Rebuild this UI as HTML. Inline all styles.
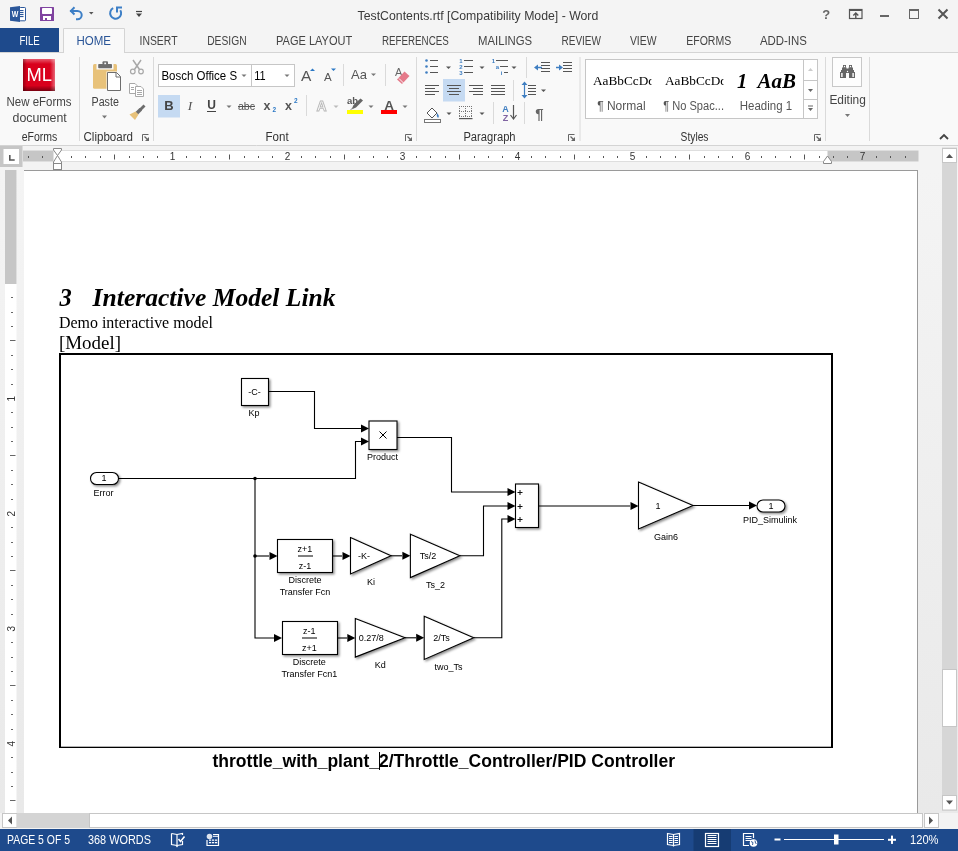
<!DOCTYPE html>
<html><head><meta charset="utf-8"><title>TestContents.rtf - Word</title>
<style>html,body{margin:0;padding:0;width:958px;height:851px;overflow:hidden;background:#f3f3f3}
svg{display:block;font-family:'Liberation Sans',sans-serif;will-change:transform}</style></head>
<body><svg width="958" height="851" viewBox="0 0 958 851">
<rect x="0" y="0" width="958" height="53" fill="#f4f4f4"/>
<rect x="19.5" y="7.5" width="6" height="13.3" fill="#fff" stroke="#2b579a" stroke-width="1" rx="0.8"/>
<rect x="20" y="10" width="3.5" height="1.1" fill="#2b579a"/>
<rect x="20" y="12" width="3.5" height="1.1" fill="#2b579a"/>
<rect x="20" y="14" width="3.5" height="1.1" fill="#2b579a"/>
<rect x="20" y="16" width="3.5" height="1.1" fill="#2b579a"/>
<path d="M10 7.2 L20 6 L20 22 L10 20.8 Z" fill="#2b579a"/>
<text x="15" y="17.1" font-size="8.5" font-weight="bold" fill="#fff" text-anchor="middle" textLength="6.6" lengthAdjust="spacingAndGlyphs">W</text>
<rect x="40" y="7" width="14" height="14" fill="#8043a0" rx="0.5"/>
<rect x="42" y="8" width="10" height="6" fill="#fff" rx="0.8"/>
<rect x="43" y="16" width="8" height="4" fill="#fff"/>
<rect x="45" y="18" width="2" height="2" fill="#8043a0"/>
<path d="M70 10.9 L77.5 10.9 A4.2 4.2 0 0 1 77.5 19.3 L76 19.3" fill="none" stroke="#3d7fc6" stroke-width="2"/>
<path d="M74.5 7.3 L70.9 10.9 L74.5 14.5" fill="none" stroke="#3d7fc6" stroke-width="2"/>
<path d="M89 12 L93.5 12 L91.25 14.5 Z" fill="#555"/>
<path d="M113.2 8.2 A5.5 5.5 0 1 0 120.3 10.2" fill="none" stroke="#3d7fc6" stroke-width="2"/>
<path d="M117 12.5 L117 7.6 L122 7.6" fill="none" stroke="#3d7fc6" stroke-width="2"/>
<line x1="136" y1="11.5" x2="142" y2="11.5" stroke="#444" stroke-width="1.2"/>
<path d="M136 13.5 L142 13.5 L139 17 Z" fill="#444"/>
<text x="357.6" y="19.5" font-size="13" fill="#3a3a3a" textLength="240.7" lengthAdjust="spacingAndGlyphs">TestContents.rtf [Compatibility Mode] - Word</text>
<text x="826.3" y="19" font-size="13" font-weight="bold" fill="#666" text-anchor="middle">?</text>
<rect x="849.5" y="9.5" width="12.5" height="9" fill="none" stroke="#555" stroke-width="1.2"/>
<line x1="849.5" y1="10.5" x2="862" y2="10.5" stroke="#555" stroke-width="1"/>
<path d="M855.8 18.5 L855.8 13 M853.3 15.5 L855.8 13 L858.3 15.5" fill="none" stroke="#555" stroke-width="1.4"/>
<rect x="880" y="15" width="9" height="2" fill="#666"/>
<rect x="909.5" y="9.5" width="9" height="9" fill="none" stroke="#666" stroke-width="1"/>
<rect x="909" y="9" width="10" height="2" fill="#666"/>
<path d="M938.5 9.5 L947.5 18.5 M947.5 9.5 L938.5 18.5" fill="none" stroke="#555" stroke-width="2"/>
<rect x="0" y="28" width="59" height="25" fill="#1e4a8c"/>
<text x="19.4" y="44.7" font-size="12" fill="#fff" textLength="20.4" lengthAdjust="spacingAndGlyphs">FILE</text>
<path d="M63.5 53 L63.5 28.5 L124.5 28.5 L124.5 53" fill="#f9f9f9" stroke="#d4d4d4" stroke-width="1"/>
<text x="76.4" y="44.7" font-size="12" fill="#2a5597" textLength="34.5" lengthAdjust="spacingAndGlyphs">HOME</text>
<text x="139.5" y="44.7" font-size="12" fill="#444" textLength="38.0" lengthAdjust="spacingAndGlyphs">INSERT</text>
<text x="207.2" y="44.7" font-size="12" fill="#444" textLength="39.4" lengthAdjust="spacingAndGlyphs">DESIGN</text>
<text x="276" y="44.7" font-size="12" fill="#444" textLength="76.2" lengthAdjust="spacingAndGlyphs">PAGE LAYOUT</text>
<text x="381.9" y="44.7" font-size="12" fill="#444" textLength="66.9" lengthAdjust="spacingAndGlyphs">REFERENCES</text>
<text x="478" y="44.7" font-size="12" fill="#444" textLength="54.2" lengthAdjust="spacingAndGlyphs">MAILINGS</text>
<text x="561.5" y="44.7" font-size="12" fill="#444" textLength="39.5" lengthAdjust="spacingAndGlyphs">REVIEW</text>
<text x="629.9" y="44.7" font-size="12" fill="#444" textLength="26.6" lengthAdjust="spacingAndGlyphs">VIEW</text>
<text x="686.2" y="44.7" font-size="12" fill="#444" textLength="45.1" lengthAdjust="spacingAndGlyphs">EFORMS</text>
<text x="759.9" y="44.7" font-size="12" fill="#444" textLength="47.0" lengthAdjust="spacingAndGlyphs">ADD-INS</text>
<rect x="0" y="53" width="958" height="92.5" fill="#f9f9f9"/>
<line x1="0" y1="52.5" x2="63.5" y2="52.5" stroke="#d4d4d4" stroke-width="1"/>
<line x1="124.5" y1="52.5" x2="958" y2="52.5" stroke="#d4d4d4" stroke-width="1"/>
<line x1="0" y1="145.5" x2="958" y2="145.5" stroke="#d4d4d4" stroke-width="1"/>
<line x1="79.5" y1="57" x2="79.5" y2="141" stroke="#dadada" stroke-width="1"/>
<line x1="153.5" y1="57" x2="153.5" y2="141" stroke="#dadada" stroke-width="1"/>
<line x1="416.5" y1="57" x2="416.5" y2="141" stroke="#dadada" stroke-width="1"/>
<line x1="580" y1="57" x2="580" y2="141" stroke="#dadada" stroke-width="1"/>
<line x1="825.5" y1="57" x2="825.5" y2="141" stroke="#dadada" stroke-width="1"/>
<line x1="869.5" y1="57" x2="869.5" y2="141" stroke="#dadada" stroke-width="1"/>
<text x="21.7" y="140.6" font-size="12" fill="#333" textLength="35.6" lengthAdjust="spacingAndGlyphs">eForms</text>
<text x="83.5" y="140.6" font-size="12" fill="#333" textLength="49.5" lengthAdjust="spacingAndGlyphs">Clipboard</text>
<text x="265.5" y="140.6" font-size="12" fill="#333" textLength="23.1" lengthAdjust="spacingAndGlyphs">Font</text>
<text x="463.4" y="140.6" font-size="12" fill="#333" textLength="52.2" lengthAdjust="spacingAndGlyphs">Paragraph</text>
<text x="680.6" y="140.6" font-size="12" fill="#333" textLength="27.9" lengthAdjust="spacingAndGlyphs">Styles</text>
<path d="M142.5 141 L142.5 134.5 L148.5 134.5" fill="none" stroke="#666" stroke-width="1"/>
<path d="M144.5 136.5 L147.5 139.5" fill="none" stroke="#666" stroke-width="1.2"/>
<path d="M149 137 L149 141 L145 141 Z" fill="#666"/>
<path d="M405.5 141 L405.5 134.5 L411.5 134.5" fill="none" stroke="#666" stroke-width="1"/>
<path d="M407.5 136.5 L410.5 139.5" fill="none" stroke="#666" stroke-width="1.2"/>
<path d="M412 137 L412 141 L408 141 Z" fill="#666"/>
<path d="M568.5 141 L568.5 134.5 L574.5 134.5" fill="none" stroke="#666" stroke-width="1"/>
<path d="M570.5 136.5 L573.5 139.5" fill="none" stroke="#666" stroke-width="1.2"/>
<path d="M575 137 L575 141 L571 141 Z" fill="#666"/>
<path d="M814.5 141 L814.5 134.5 L820.5 134.5" fill="none" stroke="#666" stroke-width="1"/>
<path d="M816.5 136.5 L819.5 139.5" fill="none" stroke="#666" stroke-width="1.2"/>
<path d="M821 137 L821 141 L817 141 Z" fill="#666"/>
<defs><linearGradient id="mlg" x1="0" y1="0" x2="0" y2="1"><stop offset="0" stop-color="#e4203a"/><stop offset="1" stop-color="#b50d20"/></linearGradient></defs>
<defs><linearGradient id="mlt" x1="0" y1="0" x2="0" y2="1"><stop offset="0" stop-color="#fff" stop-opacity="0.35"/><stop offset="1" stop-color="#fff" stop-opacity="0"/></linearGradient><linearGradient id="mlr" x1="1" y1="0" x2="0" y2="0"><stop offset="0" stop-color="#fff" stop-opacity="0.4"/><stop offset="1" stop-color="#fff" stop-opacity="0"/></linearGradient><linearGradient id="mlb" x1="0" y1="1" x2="0" y2="0"><stop offset="0" stop-color="#000" stop-opacity="0.45"/><stop offset="1" stop-color="#000" stop-opacity="0"/></linearGradient><linearGradient id="mll" x1="0" y1="0" x2="1" y2="0"><stop offset="0" stop-color="#000" stop-opacity="0.3"/><stop offset="1" stop-color="#000" stop-opacity="0"/></linearGradient></defs>
<rect x="23" y="59" width="32" height="32" fill="#d9001c"/>
<rect x="23" y="59" width="32" height="5" fill="url(#mlt)"/>
<rect x="50" y="59" width="5" height="32" fill="url(#mlr)"/>
<rect x="23" y="85.5" width="32" height="5.5" fill="url(#mlb)"/>
<rect x="23" y="59" width="4" height="32" fill="url(#mll)"/>
<text x="39.3" y="81" font-size="19" fill="#fff" text-anchor="middle" textLength="25.5" lengthAdjust="spacingAndGlyphs">ML</text>
<text x="6.5" y="105.6" font-size="12" fill="#444" textLength="65" lengthAdjust="spacingAndGlyphs">New eForms</text>
<text x="12.5" y="121.5" font-size="12" fill="#444" textLength="54.3" lengthAdjust="spacingAndGlyphs">document</text>
<rect x="93" y="64" width="24" height="24.7" fill="#e8c27a" rx="1.5"/>
<rect x="96.5" y="63" width="17" height="6.5" fill="#f9f9f9"/>
<rect x="98.2" y="64" width="13.8" height="4.2" fill="#6d6d6d" rx="0.8"/>
<rect x="102.5" y="61.2" width="5.5" height="3.5" fill="#6d6d6d" rx="1"/>
<rect x="104.3" y="62.6" width="1.8" height="1.6" fill="#f9f9f9"/>
<path d="M106.5 71.5 L117 71.5 L121.5 76 L121.5 91.5 L106.5 91.5 Z" fill="#f9f9f9"/>
<path d="M107.5 72.5 L116.5 72.5 L120.5 76.5 L120.5 90.5 L107.5 90.5 Z" fill="#fff" stroke="#6d6d6d" stroke-width="1"/>
<path d="M116 72.5 L116 77 L120.5 77" fill="none" stroke="#6d6d6d" stroke-width="1"/>
<text x="91.5" y="105.6" font-size="12" fill="#444" textLength="27.4" lengthAdjust="spacingAndGlyphs">Paste</text>
<path d="M102 115.5 L107 115.5 L104.5 118.5 Z" fill="#777"/>
<path d="M133 60 L139.5 69.5 M141 60 L134.5 69.5" fill="none" stroke="#a8a8a8" stroke-width="1.5"/>
<circle cx="132.8" cy="71.5" r="2.3" fill="none" stroke="#a8a8a8" stroke-width="1.2"/>
<circle cx="141" cy="71.5" r="2.3" fill="none" stroke="#a8a8a8" stroke-width="1.2"/>
<path d="M129.5 83.5 L135 83.5 L137 85.5 L137 93.5 L129.5 93.5 Z" fill="#fff" stroke="#a8a8a8" stroke-width="1"/>
<line x1="131" y1="87.5" x2="134" y2="87.5" stroke="#a8a8a8" stroke-width="1"/>
<line x1="131" y1="89.5" x2="134" y2="89.5" stroke="#a8a8a8" stroke-width="1"/>
<path d="M135.5 86.5 L141 86.5 L143.5 89 L143.5 96.5 L135.5 96.5 Z" fill="#fff" stroke="#a8a8a8" stroke-width="1"/>
<line x1="137" y1="90.5" x2="142" y2="90.5" stroke="#a8a8a8" stroke-width="1"/>
<line x1="137" y1="92.5" x2="142" y2="92.5" stroke="#a8a8a8" stroke-width="1"/>
<line x1="137" y1="94.5" x2="142" y2="94.5" stroke="#a8a8a8" stroke-width="1"/>
<path d="M139 109 L143.5 104.5 L145.5 106.5 L141 111 Z" fill="#6d6d6d"/>
<path d="M135.5 112 L139.5 108 L142 110.5 L138 114.5 Z" fill="#6d6d6d"/>
<path d="M129.5 114.5 L135.5 111.5 L138.5 114.5 L135 120 Z" fill="#e8c27a"/>
<rect x="158.5" y="64.5" width="93" height="22" fill="#fff" stroke="#c6c6c6" stroke-width="1"/>
<rect x="251.5" y="64.5" width="43" height="22" fill="#fff" stroke="#c6c6c6" stroke-width="1"/>
<text x="161.4" y="80" font-size="12" textLength="75.7" lengthAdjust="spacingAndGlyphs">Bosch Office S</text>
<text x="254.3" y="80" font-size="12" textLength="11.4" lengthAdjust="spacingAndGlyphs">11</text>
<path d="M241.5 74.5 L246.5 74.5 L244 77 Z" fill="#777"/>
<path d="M284.5 74.5 L289.5 74.5 L287 77 Z" fill="#777"/>
<text x="301" y="81" font-size="15.5" fill="#555">A</text>
<path d="M310 71 L315 71 L312.5 68.5 Z" fill="#2b78c5"/>
<text x="324" y="81" font-size="11.5" fill="#555">A</text>
<path d="M331 68.5 L336 68.5 L333.5 71 Z" fill="#2b78c5"/>
<line x1="343.5" y1="64" x2="343.5" y2="86" stroke="#dadada" stroke-width="1"/>
<text x="351" y="79" font-size="13" fill="#555">Aa</text>
<path d="M371 73.5 L376 73.5 L373.5 76 Z" fill="#777"/>
<line x1="385.5" y1="64" x2="385.5" y2="86" stroke="#dadada" stroke-width="1"/>
<text x="395" y="76.2" font-size="11" fill="#666">A</text>
<path d="M397 79.5 L404.5 71.5 L409.5 76 L402 84 Z" fill="#e57a8a"/>
<line x1="399" y1="78.5" x2="403.5" y2="83" stroke="#f9f9f9" stroke-width="1"/>
<rect x="158" y="95" width="22" height="22.5" fill="#c5daf2"/>
<text x="169" y="110" font-size="13" font-weight="bold" fill="#444" text-anchor="middle">B</text>
<text x="190" y="110" font-size="13.5" font-family="'Liberation Serif',serif" font-style="italic" fill="#555" text-anchor="middle">I</text>
<text x="211.5" y="109" font-size="12" font-weight="bold" fill="#444" text-anchor="middle">U</text>
<line x1="207" y1="111.5" x2="216" y2="111.5" stroke="#444" stroke-width="1"/>
<path d="M226.5 105.5 L231.5 105.5 L229 108 Z" fill="#777"/>
<text x="246.5" y="110" font-size="11.5" fill="#555" text-anchor="middle" textLength="17" lengthAdjust="spacingAndGlyphs">abc</text>
<line x1="238" y1="106.5" x2="255" y2="106.5" stroke="#555" stroke-width="1"/>
<text x="267" y="110" font-size="12.5" font-weight="bold" fill="#555" text-anchor="middle">x</text>
<text x="272.5" y="111.5" font-size="6.5" font-weight="bold" fill="#2b78c5">2</text>
<text x="288.5" y="110" font-size="12.5" font-weight="bold" fill="#555" text-anchor="middle">x</text>
<text x="294" y="102.5" font-size="6.5" font-weight="bold" fill="#2b78c5">2</text>
<line x1="306.5" y1="95" x2="306.5" y2="116" stroke="#dadada" stroke-width="1"/>
<text x="321.5" y="111" font-size="14" font-weight="bold" fill="#fdfdfd" text-anchor="middle" stroke="#b8b8b8" stroke-width="0.9">A</text>
<path d="M333.5 105.5 L338.5 105.5 L336 108 Z" fill="#bbb"/>
<text x="347" y="104" font-size="9.5" font-weight="bold" fill="#555">ab</text>
<path d="M351.5 109.5 L353.5 105 L360.5 98.5 L363 100.5 L356 107.5 Z" fill="#666"/>
<line x1="350.5" y1="110" x2="352.5" y2="108" stroke="#999" stroke-width="1"/>
<rect x="347" y="110" width="16" height="4" fill="#ffff00"/>
<path d="M368.5 105.5 L373.5 105.5 L371 108 Z" fill="#777"/>
<text x="389" y="109.5" font-size="13.5" font-weight="bold" fill="#555" text-anchor="middle">A</text>
<rect x="381" y="110" width="16" height="4" fill="#ff0000"/>
<path d="M402.5 105.5 L407.5 105.5 L405 108 Z" fill="#777"/>
<circle cx="426.5" cy="60.5" r="1.3" fill="#3f7ec1"/>
<line x1="430" y1="60.5" x2="438" y2="60.5" stroke="#555" stroke-width="1"/>
<circle cx="426.5" cy="66.5" r="1.3" fill="#3f7ec1"/>
<line x1="430" y1="66.5" x2="438" y2="66.5" stroke="#555" stroke-width="1"/>
<circle cx="426.5" cy="72.5" r="1.3" fill="#3f7ec1"/>
<line x1="430" y1="72.5" x2="438" y2="72.5" stroke="#555" stroke-width="1"/>
<path d="M446 66.5 L451 66.5 L448.5 69 Z" fill="#555"/>
<text x="461" y="62.8" font-size="6" font-weight="bold" fill="#3f7ec1" text-anchor="middle">1</text>
<line x1="464" y1="60.5" x2="473" y2="60.5" stroke="#555" stroke-width="1"/>
<text x="461" y="68.8" font-size="6" font-weight="bold" fill="#3f7ec1" text-anchor="middle">2</text>
<line x1="464" y1="66.5" x2="473" y2="66.5" stroke="#555" stroke-width="1"/>
<text x="461" y="74.8" font-size="6" font-weight="bold" fill="#3f7ec1" text-anchor="middle">3</text>
<line x1="464" y1="72.5" x2="473" y2="72.5" stroke="#555" stroke-width="1"/>
<path d="M479.5 66.5 L484.5 66.5 L482 69 Z" fill="#555"/>
<text x="493.5" y="63" font-size="6" font-weight="bold" fill="#3f7ec1" text-anchor="middle">1</text>
<line x1="496" y1="60.5" x2="508" y2="60.5" stroke="#555" stroke-width="1"/>
<text x="497.5" y="69" font-size="6" font-weight="bold" fill="#3f7ec1" text-anchor="middle">a</text>
<line x1="500" y1="66.5" x2="508" y2="66.5" stroke="#555" stroke-width="1"/>
<text x="501.5" y="75" font-size="6" font-weight="bold" fill="#3f7ec1" text-anchor="middle">i</text>
<line x1="504" y1="72.5" x2="508" y2="72.5" stroke="#555" stroke-width="1"/>
<path d="M511.5 66.5 L516.5 66.5 L514 69 Z" fill="#555"/>
<line x1="526.5" y1="57" x2="526.5" y2="78" stroke="#dadada" stroke-width="1"/>
<line x1="541" y1="62.5" x2="550" y2="62.5" stroke="#555" stroke-width="1"/>
<line x1="563" y1="62.5" x2="572" y2="62.5" stroke="#555" stroke-width="1"/>
<line x1="541" y1="65.5" x2="550" y2="65.5" stroke="#555" stroke-width="1"/>
<line x1="563" y1="65.5" x2="572" y2="65.5" stroke="#555" stroke-width="1"/>
<line x1="541" y1="68.5" x2="550" y2="68.5" stroke="#555" stroke-width="1"/>
<line x1="563" y1="68.5" x2="572" y2="68.5" stroke="#555" stroke-width="1"/>
<line x1="541" y1="71.5" x2="550" y2="71.5" stroke="#555" stroke-width="1"/>
<line x1="563" y1="71.5" x2="572" y2="71.5" stroke="#555" stroke-width="1"/>
<line x1="536" y1="67.5" x2="542" y2="67.5" stroke="#3f7ec1" stroke-width="1.5"/>
<path d="M534 67.5 L538 64.5 L538 70.5 Z" fill="#3f7ec1"/>
<line x1="556" y1="67.5" x2="561" y2="67.5" stroke="#3f7ec1" stroke-width="1.5"/>
<path d="M563 67.5 L559 64.5 L559 70.5 Z" fill="#3f7ec1"/>
<rect x="443" y="79" width="22" height="22.5" fill="#c5daf2"/>
<line x1="425" y1="85.5" x2="439" y2="85.5" stroke="#555" stroke-width="1"/>
<line x1="447" y1="85.5" x2="461" y2="85.5" stroke="#555" stroke-width="1"/>
<line x1="469" y1="85.5" x2="483" y2="85.5" stroke="#555" stroke-width="1"/>
<line x1="491" y1="85.5" x2="505" y2="85.5" stroke="#555" stroke-width="1"/>
<line x1="425" y1="88.5" x2="435" y2="88.5" stroke="#555" stroke-width="1"/>
<line x1="449" y1="88.5" x2="459" y2="88.5" stroke="#555" stroke-width="1"/>
<line x1="473" y1="88.5" x2="483" y2="88.5" stroke="#555" stroke-width="1"/>
<line x1="491" y1="88.5" x2="505" y2="88.5" stroke="#555" stroke-width="1"/>
<line x1="425" y1="91.5" x2="439" y2="91.5" stroke="#555" stroke-width="1"/>
<line x1="447" y1="91.5" x2="461" y2="91.5" stroke="#555" stroke-width="1"/>
<line x1="469" y1="91.5" x2="483" y2="91.5" stroke="#555" stroke-width="1"/>
<line x1="491" y1="91.5" x2="505" y2="91.5" stroke="#555" stroke-width="1"/>
<line x1="425" y1="94.5" x2="435" y2="94.5" stroke="#555" stroke-width="1"/>
<line x1="449" y1="94.5" x2="459" y2="94.5" stroke="#555" stroke-width="1"/>
<line x1="473" y1="94.5" x2="483" y2="94.5" stroke="#555" stroke-width="1"/>
<line x1="491" y1="94.5" x2="505" y2="94.5" stroke="#555" stroke-width="1"/>
<line x1="513.5" y1="80" x2="513.5" y2="101" stroke="#dadada" stroke-width="1"/>
<line x1="524.5" y1="83" x2="524.5" y2="97" stroke="#3f7ec1" stroke-width="1.2"/>
<path d="M521.5 85 L524.5 81.5 L527.5 85 Z M521.5 95 L524.5 98.5 L527.5 95 Z" fill="#3f7ec1"/>
<line x1="528" y1="85.5" x2="536" y2="85.5" stroke="#555" stroke-width="1"/>
<line x1="528" y1="88.5" x2="536" y2="88.5" stroke="#555" stroke-width="1"/>
<line x1="528" y1="91.5" x2="536" y2="91.5" stroke="#555" stroke-width="1"/>
<line x1="528" y1="94.5" x2="536" y2="94.5" stroke="#555" stroke-width="1"/>
<path d="M541 89.5 L546 89.5 L543.5 92 Z" fill="#555"/>
<path d="M427 113 L432 108 L437 113 L432 118 Z" fill="#fff" stroke="#555" stroke-width="1"/>
<path d="M437 113 Q440 116 438 118 Q436 116 437 113" fill="#3f7ec1"/>
<rect x="424.5" y="119.5" width="16" height="3" fill="#fff" stroke="#777" stroke-width="1"/>
<path d="M446.5 112.5 L451.5 112.5 L449 115 Z" fill="#555"/>
<rect x="459" y="106" width="1" height="1" fill="#777"/>
<rect x="461" y="106" width="1" height="1" fill="#777"/>
<rect x="463" y="106" width="1" height="1" fill="#777"/>
<rect x="465" y="106" width="1" height="1" fill="#777"/>
<rect x="467" y="106" width="1" height="1" fill="#777"/>
<rect x="469" y="106" width="1" height="1" fill="#777"/>
<rect x="471" y="106" width="1" height="1" fill="#777"/>
<rect x="459" y="111" width="1" height="1" fill="#777"/>
<rect x="461" y="111" width="1" height="1" fill="#777"/>
<rect x="463" y="111" width="1" height="1" fill="#777"/>
<rect x="465" y="111" width="1" height="1" fill="#777"/>
<rect x="467" y="111" width="1" height="1" fill="#777"/>
<rect x="469" y="111" width="1" height="1" fill="#777"/>
<rect x="471" y="111" width="1" height="1" fill="#777"/>
<rect x="459" y="116" width="1" height="1" fill="#777"/>
<rect x="461" y="116" width="1" height="1" fill="#777"/>
<rect x="463" y="116" width="1" height="1" fill="#777"/>
<rect x="465" y="116" width="1" height="1" fill="#777"/>
<rect x="467" y="116" width="1" height="1" fill="#777"/>
<rect x="469" y="116" width="1" height="1" fill="#777"/>
<rect x="471" y="116" width="1" height="1" fill="#777"/>
<rect x="459" y="108" width="1" height="1" fill="#777"/>
<rect x="459" y="110" width="1" height="1" fill="#777"/>
<rect x="459" y="113" width="1" height="1" fill="#777"/>
<rect x="459" y="115" width="1" height="1" fill="#777"/>
<rect x="465" y="108" width="1" height="1" fill="#777"/>
<rect x="465" y="110" width="1" height="1" fill="#777"/>
<rect x="465" y="113" width="1" height="1" fill="#777"/>
<rect x="465" y="115" width="1" height="1" fill="#777"/>
<rect x="471" y="108" width="1" height="1" fill="#777"/>
<rect x="471" y="110" width="1" height="1" fill="#777"/>
<rect x="471" y="113" width="1" height="1" fill="#777"/>
<rect x="471" y="115" width="1" height="1" fill="#777"/>
<rect x="459" y="118" width="13.5" height="1.2" fill="#555"/>
<path d="M479.5 112.5 L484.5 112.5 L482 115 Z" fill="#555"/>
<line x1="493.5" y1="102" x2="493.5" y2="124" stroke="#dadada" stroke-width="1"/>
<text x="505.5" y="112" font-size="9" font-weight="bold" fill="#3f7ec1" text-anchor="middle">A</text>
<text x="505.5" y="120.5" font-size="9" font-weight="bold" fill="#8064a2" text-anchor="middle">Z</text>
<line x1="513.5" y1="105" x2="513.5" y2="118" stroke="#555" stroke-width="1.2"/>
<path d="M510.5 115 L513.5 119 L516.5 115" fill="none" stroke="#555" stroke-width="1.2"/>
<line x1="524.5" y1="102" x2="524.5" y2="124" stroke="#dadada" stroke-width="1"/>
<text x="539.5" y="119" font-size="15" font-weight="bold" fill="#666" text-anchor="middle">¶</text>
<rect x="585.5" y="59.5" width="232" height="59" fill="#fff" stroke="#c6c6c6" stroke-width="1"/>
<clipPath id="c1"><rect x="590" y="60" width="61.5" height="40"/></clipPath>
<clipPath id="c2"><rect x="662" y="60" width="61.5" height="40"/></clipPath>
<g clip-path="url(#c1)">
<text x="593" y="84.6" font-size="13.4" font-family="'Liberation Serif',serif" textLength="62" lengthAdjust="spacingAndGlyphs">AaBbCcDd</text>
</g>
<g clip-path="url(#c2)">
<text x="665" y="84.6" font-size="13.4" font-family="'Liberation Serif',serif" textLength="62" lengthAdjust="spacingAndGlyphs">AaBbCcDd</text>
</g>
<text x="737" y="87.8" font-size="20.5" font-family="'Liberation Serif',serif" font-weight="bold" font-style="italic">1</text>
<text x="757.5" y="87.8" font-size="20.5" font-family="'Liberation Serif',serif" font-weight="bold" font-style="italic" textLength="38.5" lengthAdjust="spacingAndGlyphs">AaB</text>
<text x="597.2" y="110" font-size="12" fill="#555" textLength="48.4" lengthAdjust="spacingAndGlyphs">¶ Normal</text>
<text x="663.2" y="110" font-size="12" fill="#555" textLength="60.8" lengthAdjust="spacingAndGlyphs">¶ No Spac...</text>
<text x="739.8" y="110" font-size="12" fill="#555" textLength="52.3" lengthAdjust="spacingAndGlyphs">Heading 1</text>
<line x1="803.5" y1="59.5" x2="803.5" y2="118.5" stroke="#c6c6c6" stroke-width="1"/>
<line x1="803.5" y1="80.5" x2="817.5" y2="80.5" stroke="#c6c6c6" stroke-width="1"/>
<line x1="803.5" y1="99.5" x2="817.5" y2="99.5" stroke="#c6c6c6" stroke-width="1"/>
<path d="M808 71 L813 71 L810.5 68 Z" fill="#ccc"/>
<path d="M808 89 L813 89 L810.5 92 Z" fill="#666"/>
<line x1="808" y1="106" x2="813" y2="106" stroke="#666" stroke-width="1"/>
<path d="M808 108 L813 108 L810.5 111 Z" fill="#666"/>
<rect x="832.5" y="57.5" width="29" height="29" fill="#fdfdfd" stroke="#c8c8c8" stroke-width="1"/>
<rect x="843" y="65" width="3" height="2.8" fill="#666"/>
<rect x="842" y="67.5" width="4.5" height="3" fill="#666"/>
<rect x="841" y="70" width="5.5" height="2.5" fill="#666"/>
<rect x="840" y="72" width="6" height="6" fill="#666"/>
<rect x="849" y="65" width="3" height="2.8" fill="#666"/>
<rect x="848.5" y="67.5" width="4.5" height="3" fill="#666"/>
<rect x="848.5" y="70" width="5.5" height="2.5" fill="#666"/>
<rect x="849" y="72" width="6" height="6" fill="#666"/>
<rect x="846" y="68.5" width="3" height="4.5" fill="#666"/>
<rect x="841.2" y="73" width="1.4" height="4" fill="#fff"/>
<rect x="852.4" y="73" width="1.4" height="4" fill="#fff"/>
<circle cx="844.5" cy="66.5" r="0.7" fill="#fff"/><circle cx="850.5" cy="66.5" r="0.7" fill="#fff"/><circle cx="847.5" cy="71.5" r="0.7" fill="#fff"/>
<text x="829.4" y="104.1" font-size="12" fill="#444" textLength="36.4" lengthAdjust="spacingAndGlyphs">Editing</text>
<path d="M845 114 L850 114 L847.5 117 Z" fill="#777"/>
<path d="M940 139 L944 135 L948 139" fill="none" stroke="#444" stroke-width="1.8"/>
<rect x="0" y="146" width="958" height="24" fill="#f3f3f3"/>
<defs><linearGradient id="bgg" x1="0" y1="0" x2="0" y2="1"><stop offset="0" stop-color="#f4f4f4"/><stop offset="1" stop-color="#e9e9e9"/></linearGradient></defs>
<rect x="0" y="170" width="958" height="643" fill="url(#bgg)"/>
<rect x="0" y="146" width="22.5" height="21" fill="#c6c6c6"/>
<rect x="3.5" y="149" width="15.5" height="15" fill="#fff"/>
<path d="M9.8 155 L9.8 160 L14.7 160" fill="none" stroke="#555" stroke-width="1.6"/>
<rect x="23" y="150" width="895.5" height="12" fill="#dedede"/>
<rect x="23" y="151" width="895.5" height="10" fill="#fff"/>
<rect x="23" y="151" width="30.5" height="10" fill="#c6c6c6"/>
<rect x="827.5" y="151" width="91" height="10" fill="#c6c6c6"/>
<rect x="28" y="156" width="1" height="2" fill="#555"/>
<rect x="42" y="156" width="1" height="2" fill="#555"/>
<rect x="71" y="156" width="1" height="2" fill="#555"/>
<rect x="85" y="156" width="1" height="2" fill="#555"/>
<rect x="100" y="156" width="1" height="2" fill="#555"/>
<line x1="114.5" y1="154.5" x2="114.5" y2="159.5" stroke="#555" stroke-width="1"/>
<rect x="129" y="156" width="1" height="2" fill="#555"/>
<rect x="143" y="156" width="1" height="2" fill="#555"/>
<rect x="157" y="156" width="1" height="2" fill="#555"/>
<text x="172.5" y="160" font-size="10" fill="#333" text-anchor="middle">1</text>
<rect x="186" y="156" width="1" height="2" fill="#555"/>
<rect x="200" y="156" width="1" height="2" fill="#555"/>
<rect x="215" y="156" width="1" height="2" fill="#555"/>
<line x1="229.5" y1="154.5" x2="229.5" y2="159.5" stroke="#555" stroke-width="1"/>
<rect x="244" y="156" width="1" height="2" fill="#555"/>
<rect x="258" y="156" width="1" height="2" fill="#555"/>
<rect x="272" y="156" width="1" height="2" fill="#555"/>
<text x="287.5" y="160" font-size="10" fill="#333" text-anchor="middle">2</text>
<rect x="301" y="156" width="1" height="2" fill="#555"/>
<rect x="315" y="156" width="1" height="2" fill="#555"/>
<rect x="330" y="156" width="1" height="2" fill="#555"/>
<line x1="344.5" y1="154.5" x2="344.5" y2="159.5" stroke="#555" stroke-width="1"/>
<rect x="359" y="156" width="1" height="2" fill="#555"/>
<rect x="373" y="156" width="1" height="2" fill="#555"/>
<rect x="387" y="156" width="1" height="2" fill="#555"/>
<text x="402.5" y="160" font-size="10" fill="#333" text-anchor="middle">3</text>
<rect x="416" y="156" width="1" height="2" fill="#555"/>
<rect x="430" y="156" width="1" height="2" fill="#555"/>
<rect x="445" y="156" width="1" height="2" fill="#555"/>
<line x1="459.5" y1="154.5" x2="459.5" y2="159.5" stroke="#555" stroke-width="1"/>
<rect x="474" y="156" width="1" height="2" fill="#555"/>
<rect x="488" y="156" width="1" height="2" fill="#555"/>
<rect x="502" y="156" width="1" height="2" fill="#555"/>
<text x="517.5" y="160" font-size="10" fill="#333" text-anchor="middle">4</text>
<rect x="531" y="156" width="1" height="2" fill="#555"/>
<rect x="545" y="156" width="1" height="2" fill="#555"/>
<rect x="560" y="156" width="1" height="2" fill="#555"/>
<line x1="574.5" y1="154.5" x2="574.5" y2="159.5" stroke="#555" stroke-width="1"/>
<rect x="589" y="156" width="1" height="2" fill="#555"/>
<rect x="603" y="156" width="1" height="2" fill="#555"/>
<rect x="617" y="156" width="1" height="2" fill="#555"/>
<text x="632.5" y="160" font-size="10" fill="#333" text-anchor="middle">5</text>
<rect x="646" y="156" width="1" height="2" fill="#555"/>
<rect x="660" y="156" width="1" height="2" fill="#555"/>
<rect x="675" y="156" width="1" height="2" fill="#555"/>
<line x1="689.5" y1="154.5" x2="689.5" y2="159.5" stroke="#555" stroke-width="1"/>
<rect x="704" y="156" width="1" height="2" fill="#555"/>
<rect x="718" y="156" width="1" height="2" fill="#555"/>
<rect x="732" y="156" width="1" height="2" fill="#555"/>
<text x="747.5" y="160" font-size="10" fill="#333" text-anchor="middle">6</text>
<rect x="761" y="156" width="1" height="2" fill="#555"/>
<rect x="775" y="156" width="1" height="2" fill="#555"/>
<rect x="790" y="156" width="1" height="2" fill="#555"/>
<line x1="804.5" y1="154.5" x2="804.5" y2="159.5" stroke="#555" stroke-width="1"/>
<rect x="819" y="156" width="1" height="2" fill="#555"/>
<rect x="833" y="156" width="1" height="2" fill="#555"/>
<rect x="847" y="156" width="1" height="2" fill="#555"/>
<text x="862.5" y="160" font-size="10" fill="#333" text-anchor="middle">7</text>
<rect x="876" y="156" width="1" height="2" fill="#555"/>
<rect x="890" y="156" width="1" height="2" fill="#555"/>
<rect x="905" y="156" width="1" height="2" fill="#555"/>
<path d="M53.5 148.5 L61.5 148.5 L61.5 150 L57.5 155.5 L53.5 150 Z" fill="#fff" stroke="#888" stroke-width="1"/>
<path d="M53.5 162 L57.5 155.5 L61.5 162 L61.5 163.5 L53.5 163.5 Z" fill="#fff" stroke="#888" stroke-width="1"/>
<rect x="53.5" y="163.5" width="8" height="6" fill="#fff" stroke="#888" stroke-width="1"/>
<path d="M823.5 161.5 L827.5 156 L831.5 161.5 L831.5 163.5 L823.5 163.5 Z" fill="#fff" stroke="#888" stroke-width="1"/>
<rect x="5" y="170" width="11.5" height="643" fill="#fff"/>
<rect x="5" y="170" width="11.5" height="114" fill="#c6c6c6"/>
<rect x="11" y="297" width="2" height="1" fill="#666"/>
<rect x="11" y="312" width="2" height="1" fill="#666"/>
<rect x="11" y="326" width="2" height="1" fill="#666"/>
<line x1="10" y1="340.5" x2="15.5" y2="340.5" stroke="#666" stroke-width="1"/>
<rect x="11" y="355" width="2" height="1" fill="#666"/>
<rect x="11" y="369" width="2" height="1" fill="#666"/>
<rect x="11" y="384" width="2" height="1" fill="#666"/>
<text x="0" y="0" font-size="10" fill="#333" text-anchor="middle" transform="translate(15 398.6) rotate(-90)">1</text>
<rect x="11" y="412" width="2" height="1" fill="#666"/>
<rect x="11" y="427" width="2" height="1" fill="#666"/>
<rect x="11" y="441" width="2" height="1" fill="#666"/>
<line x1="10" y1="455.5" x2="15.5" y2="455.5" stroke="#666" stroke-width="1"/>
<rect x="11" y="470" width="2" height="1" fill="#666"/>
<rect x="11" y="484" width="2" height="1" fill="#666"/>
<rect x="11" y="499" width="2" height="1" fill="#666"/>
<text x="0" y="0" font-size="10" fill="#333" text-anchor="middle" transform="translate(15 513.6) rotate(-90)">2</text>
<rect x="11" y="527" width="2" height="1" fill="#666"/>
<rect x="11" y="542" width="2" height="1" fill="#666"/>
<rect x="11" y="556" width="2" height="1" fill="#666"/>
<line x1="10" y1="570.5" x2="15.5" y2="570.5" stroke="#666" stroke-width="1"/>
<rect x="11" y="585" width="2" height="1" fill="#666"/>
<rect x="11" y="599" width="2" height="1" fill="#666"/>
<rect x="11" y="614" width="2" height="1" fill="#666"/>
<text x="0" y="0" font-size="10" fill="#333" text-anchor="middle" transform="translate(15 628.6) rotate(-90)">3</text>
<rect x="11" y="642" width="2" height="1" fill="#666"/>
<rect x="11" y="657" width="2" height="1" fill="#666"/>
<rect x="11" y="671" width="2" height="1" fill="#666"/>
<line x1="10" y1="685.5" x2="15.5" y2="685.5" stroke="#666" stroke-width="1"/>
<rect x="11" y="700" width="2" height="1" fill="#666"/>
<rect x="11" y="714" width="2" height="1" fill="#666"/>
<rect x="11" y="729" width="2" height="1" fill="#666"/>
<text x="0" y="0" font-size="10" fill="#333" text-anchor="middle" transform="translate(15 743.6) rotate(-90)">4</text>
<rect x="11" y="757" width="2" height="1" fill="#666"/>
<rect x="11" y="772" width="2" height="1" fill="#666"/>
<rect x="11" y="786" width="2" height="1" fill="#666"/>
<line x1="10" y1="800.5" x2="15.5" y2="800.5" stroke="#666" stroke-width="1"/>
<rect x="24" y="170" width="893.5" height="643" fill="#fff"/>
<line x1="24" y1="170.5" x2="918" y2="170.5" stroke="#9a9a9a" stroke-width="1"/>
<line x1="917.5" y1="170" x2="917.5" y2="813" stroke="#9a9a9a" stroke-width="1"/>
<rect x="942" y="147.5" width="15" height="663" fill="#d6d6d6"/>
<rect x="942.5" y="148.5" width="14" height="14" fill="#fff" stroke="#c6c6c6" stroke-width="1"/>
<path d="M946 158 L953 158 L949.5 154 Z" fill="#555"/>
<rect x="942.5" y="669.5" width="14" height="57" fill="#fff" stroke="#c6c6c6" stroke-width="1"/>
<rect x="942.5" y="795.5" width="14" height="14.5" fill="#fff" stroke="#c6c6c6" stroke-width="1"/>
<path d="M946 800.5 L953 800.5 L949.5 804.5 Z" fill="#555"/>
<rect x="0" y="813" width="958" height="15.5" fill="#f3f3f3"/>
<rect x="2.5" y="813.5" width="14.5" height="14" fill="#fff" stroke="#c6c6c6" stroke-width="1"/>
<path d="M12 816.5 L12 824.5 L8 820.5 Z" fill="#555"/>
<rect x="17" y="813" width="72" height="15" fill="#d4d4d4"/>
<rect x="89.5" y="813.5" width="833" height="14" fill="#fff" stroke="#c6c6c6" stroke-width="1"/>
<rect x="924.5" y="813.5" width="14" height="14" fill="#fff" stroke="#c6c6c6" stroke-width="1"/>
<path d="M929 816.5 L929 824.5 L933 820.5 Z" fill="#555"/>
<rect x="0" y="829" width="958" height="22" fill="#1e4a8c"/>
<text x="7" y="844" font-size="12" fill="#fff" textLength="63" lengthAdjust="spacingAndGlyphs">PAGE 5 OF 5</text>
<text x="88" y="844" font-size="12" fill="#fff" textLength="63" lengthAdjust="spacingAndGlyphs">368 WORDS</text>
<path d="M171.5 833.5 L177 834.5 L182.5 833.5 L182.5 835" fill="none" stroke="#fff" stroke-width="1.2"/>
<path d="M171.5 833.5 L171.5 844.5 L177 845.5 L182.5 844.5 L182.5 841" fill="none" stroke="#fff" stroke-width="1.2"/>
<line x1="177" y1="834.5" x2="177" y2="845" stroke="#fff" stroke-width="1.2"/>
<path d="M178.5 839 L180.5 841.5 L184.5 836.5" fill="none" stroke="#fff" stroke-width="1.6"/>
<path d="M175.5 845.5 L178.5 845.5 L177 847.5 Z" fill="#fff"/>
<circle cx="209.5" cy="836.5" r="2.8" fill="#dde4ee"/>
<path d="M213 834.5 L218.5 834.5 L218.5 845.5 L207 845.5 L207 840" fill="none" stroke="#fff" stroke-width="1.2"/>
<line x1="213" y1="836.3" x2="218.5" y2="836.3" stroke="#fff" stroke-width="1"/>
<rect x="209" y="839.5" width="2.2" height="1.3" fill="#fff"/>
<rect x="212" y="839.5" width="2.2" height="1.3" fill="#fff"/>
<rect x="215" y="839.5" width="2.2" height="1.3" fill="#fff"/>
<rect x="209" y="842" width="2.2" height="1.3" fill="#fff"/>
<rect x="212" y="842" width="2.2" height="1.3" fill="#fff"/>
<rect x="215" y="842" width="2.2" height="1.3" fill="#fff"/>
<rect x="693.5" y="829" width="37.5" height="22" fill="#163c73"/>
<path d="M667.5 833.5 L673.5 834.5 L679.5 833.5 L679.5 844.5 L673.5 845.5 L667.5 844.5 Z" fill="none" stroke="#fff" stroke-width="1.2"/>
<line x1="673.5" y1="834.5" x2="673.5" y2="846.5" stroke="#fff" stroke-width="1.2"/>
<line x1="669" y1="836.5" x2="672.5" y2="836.5" stroke="#fff" stroke-width="1"/>
<line x1="674.5" y1="836.5" x2="678" y2="836.5" stroke="#fff" stroke-width="1"/>
<line x1="669" y1="838.5" x2="672.5" y2="838.5" stroke="#fff" stroke-width="1"/>
<line x1="674.5" y1="838.5" x2="678" y2="838.5" stroke="#fff" stroke-width="1"/>
<line x1="669" y1="840.5" x2="672.5" y2="840.5" stroke="#fff" stroke-width="1"/>
<line x1="674.5" y1="840.5" x2="678" y2="840.5" stroke="#fff" stroke-width="1"/>
<line x1="669" y1="842.5" x2="672.5" y2="842.5" stroke="#fff" stroke-width="1"/>
<line x1="674.5" y1="842.5" x2="678" y2="842.5" stroke="#fff" stroke-width="1"/>
<rect x="705.5" y="833.5" width="13" height="13" fill="none" stroke="#fff" stroke-width="1.2"/>
<line x1="707.5" y1="835.5" x2="716.5" y2="835.5" stroke="#fff" stroke-width="1"/>
<line x1="707.5" y1="837.5" x2="716.5" y2="837.5" stroke="#fff" stroke-width="1"/>
<line x1="707.5" y1="839.5" x2="716.5" y2="839.5" stroke="#fff" stroke-width="1"/>
<line x1="707.5" y1="841.5" x2="716.5" y2="841.5" stroke="#fff" stroke-width="1"/>
<line x1="707.5" y1="843.5" x2="716.5" y2="843.5" stroke="#fff" stroke-width="1"/>
<path d="M753.5 838 L753.5 833.5 L743.5 833.5 L743.5 845.5 L749 845.5" fill="none" stroke="#fff" stroke-width="1.2"/>
<line x1="745.5" y1="836.5" x2="751.5" y2="836.5" stroke="#fff" stroke-width="1"/>
<line x1="745.5" y1="838.5" x2="751.5" y2="838.5" stroke="#fff" stroke-width="1"/>
<line x1="745.5" y1="840.5" x2="751.5" y2="840.5" stroke="#fff" stroke-width="1"/>
<circle cx="753.5" cy="843" r="3.8" fill="#fff"/>
<path d="M751 841.5 L753 842.5 L752.5 845 M755 840.5 L755.5 843 L756.5 844" fill="none" stroke="#1e4a8c" stroke-width="0.9"/>
<rect x="774.5" y="838.5" width="6" height="2" fill="#fff"/>
<line x1="784" y1="839.5" x2="884" y2="839.5" stroke="#fff" stroke-width="1"/>
<rect x="834" y="834.5" width="4.5" height="10" fill="#fff"/>
<rect x="888" y="838.8" width="8" height="2" fill="#fff"/>
<rect x="891" y="835.6" width="2" height="8.3" fill="#fff"/>
<text x="910" y="843.8" font-size="12" fill="#fff" textLength="28.5" lengthAdjust="spacingAndGlyphs">120%</text>
<text x="59.4" y="306" font-size="24.5" font-family="'Liberation Serif',serif" font-weight="bold" font-style="italic">3</text>
<text x="92.6" y="306" font-size="24.5" font-family="'Liberation Serif',serif" font-weight="bold" font-style="italic" textLength="243" lengthAdjust="spacingAndGlyphs">Interactive Model Link</text>
<text x="59" y="328" font-size="16" font-family="'Liberation Serif',serif" textLength="154" lengthAdjust="spacingAndGlyphs">Demo interactive model</text>
<text x="59" y="348.7" font-size="18.5" font-family="'Liberation Serif',serif" textLength="62" lengthAdjust="spacingAndGlyphs">[Model]</text>
<rect x="59" y="353" width="774" height="2" fill="#000"/>
<rect x="59" y="353" width="2" height="395" fill="#000"/>
<rect x="831" y="353" width="2" height="395" fill="#000"/>
<rect x="59" y="746.7" width="774" height="1.3" fill="#000"/>
<text x="212.5" y="767" font-size="18" font-weight="bold" textLength="462.5" lengthAdjust="spacingAndGlyphs">throttle_with_plant_2/Throttle_Controller/PID Controller</text>
<line x1="379.5" y1="752" x2="379.5" y2="770" stroke="#000" stroke-width="1"/>
<defs><filter id="sh" x="-20%" y="-20%" width="150%" height="150%"><feDropShadow dx="1.5" dy="1.5" stdDeviation="1" flood-color="#000" flood-opacity="0.45"/></filter></defs>
<rect x="241.5" y="378.5" width="27" height="27" fill="#fff" stroke="#000" stroke-width="1.1" filter="url(#sh)"/>
<text x="254.5" y="394.5" font-size="9" text-anchor="middle">-C-</text>
<text x="254" y="415.5" font-size="9" text-anchor="middle">Kp</text>
<path d="M269 391.5 L314.5 391.5 L314.5 428.5 L361 428.5" fill="none" stroke="#000" stroke-width="1.1"/>
<path d="M369 428.5 L361 424.5 L361 432.5 Z" fill="#000"/>
<rect x="369" y="421" width="28" height="28.5" fill="#fff" stroke="#000" stroke-width="1.1" filter="url(#sh)"/>
<path d="M379.5 431.5 L386.5 438.5 M386.5 431.5 L379.5 438.5" fill="none" stroke="#000" stroke-width="1"/>
<text x="382.5" y="460" font-size="9" text-anchor="middle">Product</text>
<rect x="90.5" y="472.5" width="28" height="12" fill="#fff" stroke="#000" stroke-width="1.1" rx="6" filter="url(#sh)"/>
<text x="104" y="480.7" font-size="9" text-anchor="middle">1</text>
<text x="103.6" y="495.5" font-size="9" text-anchor="middle">Error</text>
<path d="M118.5 478.5 L355.5 478.5 L355.5 441.5 L361 441.5" fill="none" stroke="#000" stroke-width="1.1"/>
<path d="M369 441.5 L361 437.5 L361 445.5 Z" fill="#000"/>
<circle cx="255" cy="478.5" r="1.8" fill="#000"/>
<path d="M255 478.5 L255 638 L274 638" fill="none" stroke="#000" stroke-width="1.1"/>
<path d="M282 638 L274 634 L274 642 Z" fill="#000"/>
<path d="M255 556 L269 556" fill="none" stroke="#000" stroke-width="1.1"/>
<path d="M277.5 556 L269.5 552 L269.5 560 Z" fill="#000"/>
<circle cx="255" cy="556" r="1.8" fill="#000"/>
<path d="M397 437.5 L451.5 437.5 L451.5 492 L508 492" fill="none" stroke="#000" stroke-width="1.1"/>
<path d="M515.5 492 L507.5 488 L507.5 496 Z" fill="#000"/>
<rect x="515.5" y="484" width="23" height="43.5" fill="#fff" stroke="#000" stroke-width="1.1" filter="url(#sh)"/>
<path d="M517.5 492.5 L522.5 492.5 M520 490 L520 495" fill="none" stroke="#111" stroke-width="1"/>
<path d="M517.5 506.5 L522.5 506.5 M520 504 L520 509" fill="none" stroke="#111" stroke-width="1"/>
<path d="M517.5 519.5 L522.5 519.5 M520 517 L520 522" fill="none" stroke="#111" stroke-width="1"/>
<path d="M539 506 L630 506" fill="none" stroke="#000" stroke-width="1.1"/>
<path d="M638.5 506 L630.5 502 L630.5 510 Z" fill="#000"/>
<path d="M638.5 482 L693 505.5 L638.5 529 Z" fill="#fff" stroke="#000" stroke-width="1.1" filter="url(#sh)"/>
<text x="658" y="508.5" font-size="9" text-anchor="middle">1</text>
<text x="666" y="540" font-size="9" text-anchor="middle">Gain6</text>
<path d="M693 505.5 L749 505.5" fill="none" stroke="#000" stroke-width="1.1"/>
<path d="M757 505.5 L749 501.5 L749 509.5 Z" fill="#000"/>
<rect x="757" y="500" width="28" height="12" fill="#fff" stroke="#000" stroke-width="1.1" rx="6" filter="url(#sh)"/>
<text x="771" y="509" font-size="9" text-anchor="middle">1</text>
<text x="770" y="523" font-size="9" text-anchor="middle">PID_Simulink</text>
<rect x="277.5" y="539.5" width="55" height="33" fill="#fff" stroke="#000" stroke-width="1.1" filter="url(#sh)"/>
<text x="305" y="552" font-size="9" text-anchor="middle">z+1</text>
<line x1="298" y1="556" x2="313" y2="556" stroke="#000" stroke-width="1"/>
<text x="305" y="568.5" font-size="9" text-anchor="middle">z-1</text>
<text x="305" y="582.5" font-size="9" text-anchor="middle">Discrete</text>
<text x="305" y="594.5" font-size="9" text-anchor="middle">Transfer Fcn</text>
<path d="M333 556 L342 556" fill="none" stroke="#000" stroke-width="1.1"/>
<path d="M350.5 556 L342.5 552 L342.5 560 Z" fill="#000"/>
<path d="M350.5 537.5 L391 555.8 L350.5 574 Z" fill="#fff" stroke="#000" stroke-width="1.1" filter="url(#sh)"/>
<text x="364" y="559" font-size="9" text-anchor="middle">-K-</text>
<text x="371" y="584.5" font-size="9" text-anchor="middle">Ki</text>
<path d="M391 555.8 L402 555.8" fill="none" stroke="#000" stroke-width="1.1"/>
<path d="M410.4 555.8 L402.4 551.8 L402.4 559.8 Z" fill="#000"/>
<path d="M410.4 534.2 L459.8 555.8 L410.4 577.6 Z" fill="#fff" stroke="#000" stroke-width="1.1" filter="url(#sh)"/>
<text x="428" y="559" font-size="9" text-anchor="middle">Ts/2</text>
<text x="435.6" y="588" font-size="9" text-anchor="middle">Ts_2</text>
<path d="M460 555.8 L483.5 555.8 L483.5 506 L508 506" fill="none" stroke="#000" stroke-width="1.1"/>
<path d="M515.5 506 L507.5 502 L507.5 510 Z" fill="#000"/>
<rect x="282.5" y="621.5" width="55" height="33" fill="#fff" stroke="#000" stroke-width="1.1" filter="url(#sh)"/>
<text x="309.3" y="634" font-size="9" text-anchor="middle">z-1</text>
<line x1="302" y1="638" x2="317" y2="638" stroke="#000" stroke-width="1"/>
<text x="309.3" y="651" font-size="9" text-anchor="middle">z+1</text>
<text x="309.3" y="664.5" font-size="9" text-anchor="middle">Discrete</text>
<text x="309.3" y="676.5" font-size="9" text-anchor="middle">Transfer Fcn1</text>
<path d="M338 638 L347 638" fill="none" stroke="#000" stroke-width="1.1"/>
<path d="M355.3 638 L347.3 634 L347.3 642 Z" fill="#000"/>
<path d="M355.3 618.6 L405 637.8 L355.3 657.1 Z" fill="#fff" stroke="#000" stroke-width="1.1" filter="url(#sh)"/>
<text x="371.3" y="641" font-size="9" text-anchor="middle">0.27/8</text>
<text x="380.2" y="667.5" font-size="9" text-anchor="middle">Kd</text>
<path d="M405 637.8 L416 637.8" fill="none" stroke="#000" stroke-width="1.1"/>
<path d="M424.2 637.8 L416.2 633.8 L416.2 641.8 Z" fill="#000"/>
<path d="M424.2 616.3 L473.7 637.8 L424.2 659.4 Z" fill="#fff" stroke="#000" stroke-width="1.1" filter="url(#sh)"/>
<text x="441.4" y="641" font-size="9" text-anchor="middle">2/Ts</text>
<text x="448.5" y="670" font-size="9" text-anchor="middle">two_Ts</text>
<path d="M474 637.8 L501.8 637.8 L501.8 519 L508 519" fill="none" stroke="#000" stroke-width="1.1"/>
<path d="M515.5 519 L507.5 515 L507.5 523 Z" fill="#000"/>
</svg></body></html>
